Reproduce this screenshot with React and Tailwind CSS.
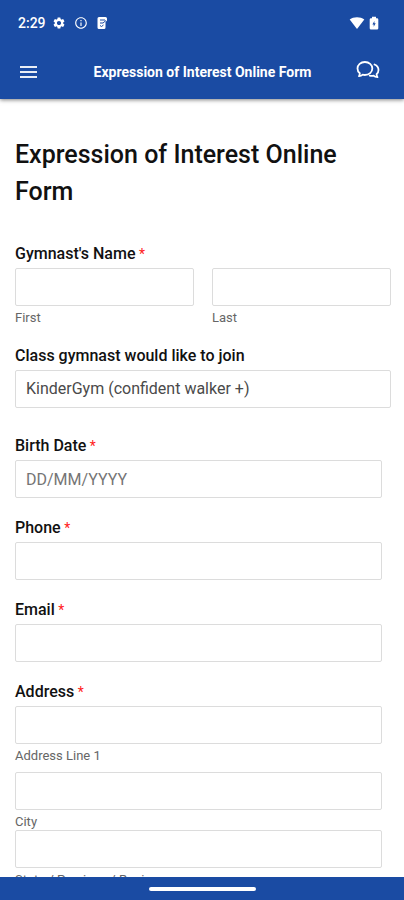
import { useState } from 'react';
import { MdSettings, MdInfoOutline } from 'react-icons/md';

const inputClass =
  'block h-[38px] w-full appearance-none rounded-[2px] border border-[#dcdcdc] bg-white px-2.5 text-base text-[#4a4a4a] outline-none placeholder:text-[#757575]';

const ChatIcon = () => (
  <svg className="h-5 w-6" viewBox="0 0 24 20" fill="none" stroke="currentColor" strokeWidth="1.800" strokeLinecap="round" strokeLinejoin="round">
    <path d="M3.800 13.300C2.300 12.100 1.500 10.400 1.500 8.500 1.500 4.700 4.700 2 8.900 2s7.400 2.700 7.400 6.500-3.200 6.500-7.400 6.500c-.8 0-1.500-.1-2.200-.3-1 .9-2.200 1.400-3.700 1.500.5-.8.8-1.800.8-2.900z" />
    <path d="M18.500 4.500c2.400 1 4 3.100 4 5.500 0 1.700-.7 3.100-1.900 4.200 0 1.100.3 2.200.9 3-1.600-.1-2.900-.6-3.900-1.600-1.300.3-2.700.3-3.900 0" />
  </svg>
);

const NoteIcon = () => (
  <svg className="h-3.5 w-3" viewBox="0 0 12 14">
    <path fill="currentColor" d="M3 1h6.500A1.500 1.500 0 0 1 11 2.500v2L9.500 6v5.500A1.500 1.500 0 0 1 8 13H3A1.500 1.500 0 0 1 1.500 11.500v-9A1.500 1.500 0 0 1 3 1z" />
    <path d="M4 4h5M4 7h3l3-2.500M4 9.500l1.500 1L7.500 9" fill="none" stroke="#1a4ba3" strokeWidth="1" />
  </svg>
);

const WifiIcon = () => (
  <svg className="h-3 w-4" viewBox="0 0 16 12" fill="currentColor">
    <path d="M.7 2.500C2.700 1 5.200.2 8 .2s5.300.8 7.300 2.300L8 12z" />
  </svg>
);

const BatteryIcon = () => (
  <svg className="h-3.5 w-2.5" viewBox="0 0 10 14">
    <path fill="currentColor" d="M3 .8h4v1.400h1A1.300 1.300 0 0 1 9.300 3.500v8.700A1.300 1.300 0 0 1 8 13.500H2A1.300 1.300 0 0 1 .7 12.200V3.500A1.300 1.300 0 0 1 2 2.200h1z" />
    <path d="M5.400 5 3.400 8.500h1.300v2.300l2-3.500H5.400z" fill="#1a4ba3" />
  </svg>
);

const StatusBar = () => (
  <div className="flex h-[45px] items-center justify-between pr-[25px] pl-[18px]">
    <div className="flex items-center gap-1.5">
      <span className="text-sm leading-4 font-medium">2:29</span>
      <div className="flex items-center gap-2">
        <MdSettings className="h-3.5 w-3.5" />
        <MdInfoOutline className="h-3.5 w-3.5" />
        <NoteIcon />
      </div>
    </div>
    <div className="flex items-center gap-1">
      <WifiIcon />
      <BatteryIcon />
    </div>
  </div>
);

const Label = ({ htmlFor, required, children }) => (
  <label htmlFor={htmlFor} className="mb-1 block text-base leading-5 font-medium text-[#111]">
    {children}
    {required && <span className="text-sm leading-4 font-normal text-[#ff2020]"> *</span>}
  </label>
);

// Input with its caption underneath
const CaptionedInput = ({ id, caption }) => (
  <div>
    <input id={id} type="text" className={inputClass} />
    <label htmlFor={id} className="mt-1 block text-[13px] leading-4 text-[#666]">
      {caption}
    </label>
  </div>
);

const App = () => {
  const [gymClass, setGymClass] = useState('kindergym');

  return (
    <div className="flex h-screen flex-col bg-white font-['Roboto',sans-serif]">
      <header className="z-10 shrink-0 bg-[#1a4ba3] text-white shadow-[0_1px_4px_rgba(0,0,0,0.5)]">
        <StatusBar />
        <div className="flex h-[54px] items-center pr-6 pl-5">
          <button type="button" aria-label="Menu" className="flex w-[17px] flex-col gap-[3px]">
            <span className="h-0.5 bg-white/90" />
            <span className="h-0.5 bg-white/90" />
            <span className="h-0.5 bg-white/90" />
          </button>
          <div className="flex-1 pl-3 text-center text-sm leading-5 font-bold">Expression of Interest Online Form</div>
          <button type="button" aria-label="Messages" className="pb-1">
            <ChatIcon />
          </button>
        </div>
      </header>

      <main className="min-h-0 flex-1 overflow-hidden pt-[37px] pr-[13px] pl-[15px]">
        <h1 className="mb-[34px] text-[25px] leading-[37px] font-medium text-[#111]">
          Expression of Interest Online Form
        </h1>

        <form>
          <fieldset className="mb-5">
            <Label htmlFor="first" required>Gymnast's Name</Label>
            <div className="grid grid-cols-2 gap-[18px]">
              <CaptionedInput id="first" caption="First" />
              <CaptionedInput id="last" caption="Last" />
            </div>
          </fieldset>

          <div className="mb-7">
            <Label htmlFor="class">Class gymnast would like to join</Label>
            <select id="class" value={gymClass} onChange={(e) => setGymClass(e.target.value)} className={inputClass}>
              <option value="kindergym">KinderGym (confident walker +)</option>
            </select>
          </div>

          <div className="flex flex-col gap-5 pr-[9px]">
            <div>
              <Label htmlFor="birth" required>Birth Date</Label>
              <input id="birth" type="text" placeholder="DD/MM/YYYY" className={inputClass} />
            </div>
            <div>
              <Label htmlFor="phone" required>Phone</Label>
              <input id="phone" type="tel" className={inputClass} />
            </div>
            <div>
              <Label htmlFor="email" required>Email</Label>
              <input id="email" type="email" className={inputClass} />
            </div>
            <fieldset>
              <Label htmlFor="address1" required>Address</Label>
              <div className="mb-2">
                <CaptionedInput id="address1" caption="Address Line 1" />
              </div>
              <CaptionedInput id="city" caption="City" />
              <CaptionedInput id="state" caption="State / Province / Region" />
            </fieldset>
          </div>
        </form>
      </main>

      <footer className="z-10 flex h-[23px] shrink-0 items-center justify-center bg-[#1a4ba3]">
        <div className="h-1 w-[107px] rounded-full bg-white" />
      </footer>
    </div>
  );
};

export default App;
